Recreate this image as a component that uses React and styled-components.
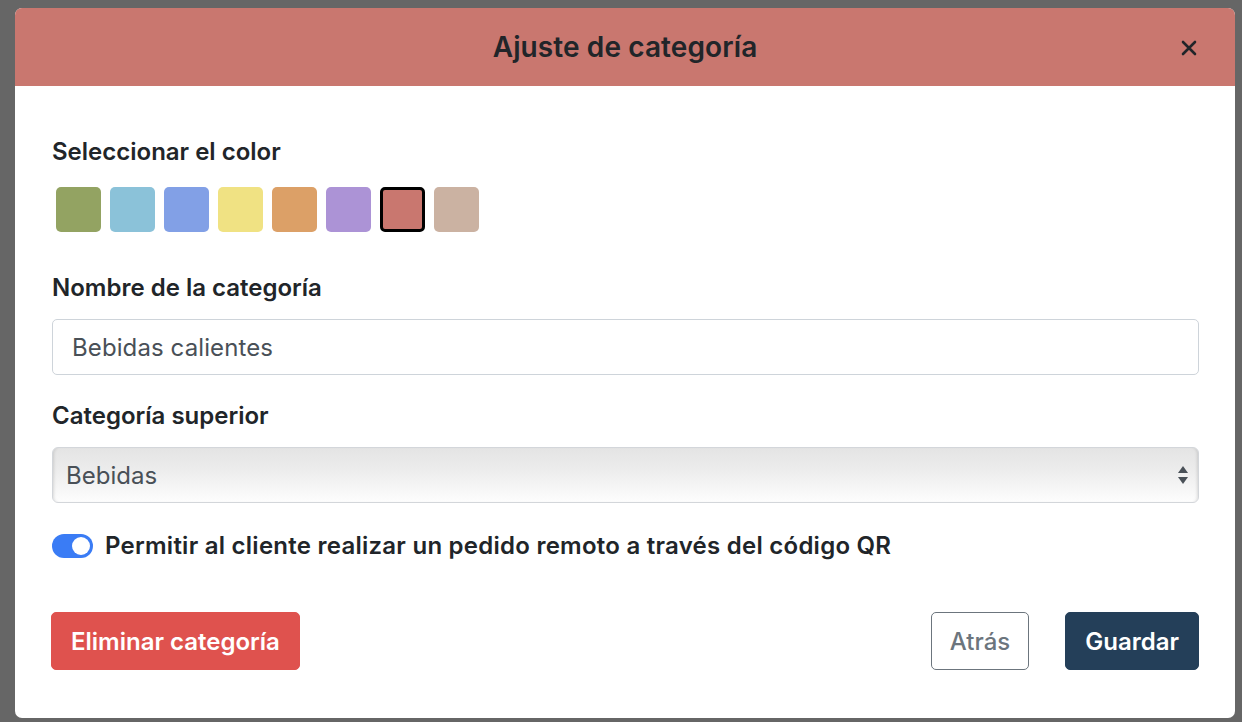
import { useState } from "react";
import styled, { createGlobalStyle } from "styled-components";

const GlobalStyle = createGlobalStyle`
  html, body {
    margin: 0;
    padding: 0;
    background: #666666;
    font-family: Inter, "Noto Sans", "Liberation Sans", sans-serif;
    color: #212529;
  }
  * { box-sizing: border-box; }
`;

const COLORS = [
  "#93a362",
  "#8bc2d9",
  "#82a0e6",
  "#f0e283",
  "#dca067",
  "#ac93d6",
  "#c9776f",
  "#cbb2a2",
];

const Screen = styled.div`
  width: 1242px;
  height: 722px;
  padding: 8px 7px 0 15px;
  overflow: hidden;
`;

const Modal = styled.div`
  width: 1220px;
  height: 710px;
  background: #fff;
  border-radius: 7px;
  overflow: hidden;
  display: flex;
  flex-direction: column;
`;

const Header = styled.div`
  height: 78px;
  flex-shrink: 0;
  background: ${(p) => p.$color};
  display: flex;
  align-items: center;
  justify-content: center;
  position: relative;
`;

const Title = styled.h2`
  margin: 0;
  font-size: 28px;
  line-height: 32px;
  font-weight: 600;
  letter-spacing: 0.1px;
  color: #212529;
`;

const Close = styled.button`
  position: absolute;
  right: 36px;
  top: 30px;
  width: 20px;
  height: 20px;
  padding: 0;
  border: none;
  background: transparent;
  display: flex;
  align-items: center;
  justify-content: center;
  cursor: pointer;
`;

const Body = styled.div`
  flex: 1;
  display: flex;
  flex-direction: column;
  padding: 52px 36px 0 37px;
`;

const Label = styled.div`
  font-size: 24px;
  line-height: 28px;
  font-weight: 600;
  color: #212529;
  margin-top: ${(p) => p.$mt || 0}px;
`;

const Swatches = styled.div`
  display: flex;
  gap: 9px;
  margin-top: 21px;
  padding-left: 4px;
`;

const Swatch = styled.button`
  width: 45px;
  height: 45px;
  padding: 0;
  border-radius: 5px;
  background: ${(p) => p.$color};
  border: ${(p) => (p.$active ? "3px solid #000" : "none")};
  cursor: pointer;
`;

const Input = styled.input`
  margin-top: 17px;
  width: 100%;
  height: 56px;
  border: 1.5px solid #ced4da;
  border-radius: 5px;
  padding: 0 19px;
  font-family: inherit;
  font-size: 24px;
  letter-spacing: 0.1px;
  color: #495057;
  outline: none;
`;

const SelectWrap = styled.div`
  margin-top: 17px;
  position: relative;
`;

const Select = styled.select`
  appearance: none;
  width: 100%;
  height: 56px;
  border: 1.5px solid #d3d6da;
  border-radius: 6px;
  padding: 0 13px;
  font-family: inherit;
  font-size: 24px;
  color: #495057;
  background: linear-gradient(180deg, #e4e4e4 0%, #ebebeb 35%, #f6f6f6 75%, #fdfdfd 100%);
  box-shadow: inset 3px 0 3px -2px rgba(0, 0, 0, 0.12), inset -3px 0 3px -2px rgba(0, 0, 0, 0.12);
  outline: none;
`;

const Arrows = styled.svg`
  position: absolute;
  right: 10px;
  top: 18px;
  pointer-events: none;
`;

const ToggleRow = styled.label`
  margin-top: 29px;
  display: flex;
  align-items: center;
  gap: 12px;
  font-size: 24px;
  line-height: 28px;
  font-weight: 600;
  letter-spacing: 0.25px;
  color: #212529;
`;

const Track = styled.span`
  width: 41px;
  height: 24px;
  border-radius: 12px;
  background: ${(p) => (p.$on ? "#3a7cf5" : "#ced4da")};
  display: flex;
  align-items: center;
  justify-content: ${(p) => (p.$on ? "flex-end" : "flex-start")};
  padding: 0 3px;
  flex-shrink: 0;
`;

const Knob = styled.span`
  width: 18px;
  height: 18px;
  border-radius: 50%;
  background: #fff;
`;

const Footer = styled.div`
  margin-top: 52px;
  display: flex;
  align-items: center;
`;

const Spacer = styled.div`
  flex: 1;
`;

const Button = styled.button`
  height: 58px;
  padding: 0 ${(p) => p.$px || 19}px;
  border-radius: 5px;
  font-family: inherit;
  font-size: 24px;
  font-weight: ${(p) => p.$weight || 600};
  cursor: pointer;
  border: 1.5px solid ${(p) => p.$border};
  background: ${(p) => p.$bg};
  color: ${(p) => p.$fg};
  margin-left: ${(p) => p.$ml || 0}px;
  margin-right: ${(p) => p.$mr || 0}px;
`;

export default function App() {
  const [color, setColor] = useState("#c9776f");
  const [remote, setRemote] = useState(true);

  return (
    <Screen>
      <GlobalStyle />
      <Modal>
        <Header $color={color}>
          <Title>Ajuste de categoría</Title>
          <Close aria-label="Cerrar">
            <svg width="16" height="16" viewBox="0 0 16 16">
              <path d="M2 2 L14 14 M14 2 L2 14" stroke="#212529" strokeWidth="2.6" strokeLinecap="round" />
            </svg>
          </Close>
        </Header>
        <Body>
          <Label>Seleccionar el color</Label>
          <Swatches>
            {COLORS.map((c) => (
              <Swatch key={c} $color={c} $active={c === color} onClick={() => setColor(c)} />
            ))}
          </Swatches>

          <Label $mt={42}>Nombre de la categoría</Label>
          <Input defaultValue="Bebidas calientes" />

          <Label $mt={27}>Categoría superior</Label>
          <SelectWrap>
            <Select defaultValue="Bebidas">
              <option>Bebidas</option>
              <option>Comidas</option>
            </Select>
            <Arrows width="12" height="20" viewBox="0 0 12 20">
              <path d="M6 1 L11 8 L1 8 Z" fill="#495057" />
              <path d="M1 12 L11 12 L6 19 Z" fill="#495057" />
            </Arrows>
          </SelectWrap>

          <ToggleRow onClick={() => setRemote(!remote)}>
            <Track $on={remote}>
              <Knob />
            </Track>
            Permitir al cliente realizar un pedido remoto a través del código QR
          </ToggleRow>

          <Footer>
            <Button $bg="#df524e" $border="#df524e" $fg="#fff" $ml={-1} $px={19}>
              Eliminar categoría
            </Button>
            <Spacer />
            <Button $bg="#fff" $border="#6c757d" $fg="#6c757d" $mr={36} $px={18} $weight={500}>
              Atrás
            </Button>
            <Button $bg="#243f59" $border="#243f59" $fg="#fff" $px={19}>
              Guardar
            </Button>
          </Footer>
        </Body>
      </Modal>
    </Screen>
  );
}
